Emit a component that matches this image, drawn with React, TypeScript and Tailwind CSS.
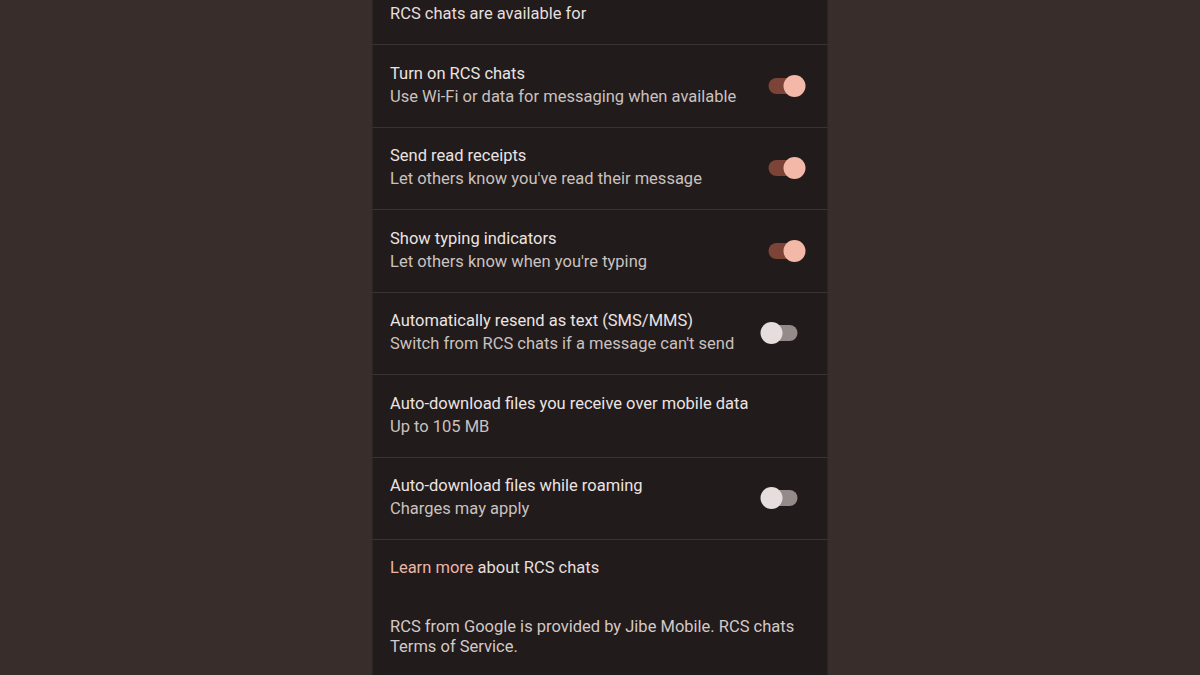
import React from 'react';

type Row = {
  title: string;
  subtitle: string;
  toggle?: boolean;
};

const rows: Row[] = [
  { title: 'Turn on RCS chats', subtitle: 'Use Wi-Fi or data for messaging when available', toggle: true },
  { title: 'Send read receipts', subtitle: "Let others know you've read their message", toggle: true },
  { title: 'Show typing indicators', subtitle: "Let others know when you're typing", toggle: true },
  { title: 'Automatically resend as text (SMS/MMS)', subtitle: "Switch from RCS chats if a message can't send", toggle: false },
  { title: 'Auto-download files you receive over mobile data', subtitle: 'Up to 105 MB' },
  { title: 'Auto-download files while roaming', subtitle: 'Charges may apply', toggle: false },
];

function Toggle({ on }: { on: boolean }) {
  return (
    <div className={`relative w-[29px] h-4 rounded-full ${on ? 'bg-[#7b4436]' : 'bg-[#958a8a]'}`}>
      <div
        className={`absolute top-1/2 -translate-y-1/2 w-[22px] h-[22px] rounded-full ${
          on ? 'left-[15px] bg-[#f3b8a7]' : '-left-[8px] bg-[#e6dddd]'
        }`}
      />
    </div>
  );
}

export default function App() {
  return (
    <div className="min-h-screen h-[675px] bg-[#392d2c] flex justify-center overflow-hidden font-['Roboto',sans-serif]">
      <div className="w-[455px] h-full bg-[#211b1b] -translate-x-[0.5px]">
        <div className="h-[44px] px-[18px] pt-[2px] text-[16.5px] leading-[23px] text-[#e6dedc]">
          RCS chats are available for
        </div>

        {rows.map((r) => (
          <div
            key={r.title}
            className="h-[82.5px] border-t border-[#3a3333] pl-[18px] pr-[30px] flex items-center justify-between"
          >
            <div className="text-[16.5px] leading-[23px] -mt-[2px]">
              <div className="text-[#ebe3e1]">{r.title}</div>
              <div className="text-[#cbc1bf]">{r.subtitle}</div>
            </div>
            {r.toggle !== undefined ? <Toggle on={r.toggle} /> : null}
          </div>
        ))}

        <div className="border-t border-[#3a3333] pl-[18px] pr-[10px] pt-[18px] text-[16.5px] leading-[20px]">
          <div className="text-[#e6dedc]">
            <span className="text-[#e9b6a7]">Learn more</span> about RCS chats
          </div>
          <div className="mt-[39px] text-[#d3c9c7]">
            RCS from Google is provided by Jibe Mobile. RCS chats Terms of Service.
          </div>
        </div>
      </div>
    </div>
  );
}
